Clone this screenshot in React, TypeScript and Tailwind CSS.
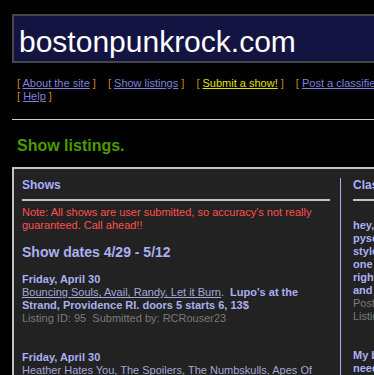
import React from "react";

type NavProps = { label: string; hot?: boolean };

function NavItem({ label, hot }: NavProps) {
  return (
    <span className="mr-[12px] whitespace-nowrap">
      <span className="text-[#d08a00]">[ </span>
      <a
        href="#"
        className={hot ? "text-[#e2e000] underline" : "text-[#7f82dc] underline"}
      >
        {label}
      </a>
      <span className="text-[#d08a00]"> ]</span>
    </span>
  );
}

export default function App() {
  return (
    <div className="w-[374px] h-[375px] overflow-hidden bg-black font-['Liberation_Sans',Arial,Helvetica,sans-serif]">
      <div className="w-[540px] pl-[12px] pt-[14px]">
        {/* masthead */}
        <div className="h-[49px] border-2 border-[#464646] bg-[#141442] pl-[5px] pt-[3px] text-[30px] text-white">
          bostonpunkrock.com
        </div>

        {/* nav */}
        <div className="mt-[14px] w-[430px] pl-[5px] text-[11px] leading-[13px]">
          <NavItem label="About the site" />
          <NavItem label="Show listings" />
          <NavItem label="Submit a show!" hot />
          <NavItem label="Post a classified ad" />
          <NavItem label="Help" />
        </div>

        <div className="mt-[16px] h-px bg-[#cccccc]" />

        <h1 className="mt-[17px] pl-[5px] text-[16px] leading-[18px] font-bold text-[#4c9a00]">
          Show listings.
        </h1>

        {/* listings panel */}
        <div className="mt-[12px] flex items-start border-2 border-[#c4c4c4] bg-[#222222] pt-[9px] pb-8 text-[11px] leading-[13px]">
          <div className="ml-[8px] w-[308px] shrink-0">
            <h2 className="text-[12px] leading-[14px] font-bold text-[#aab0ff]">Shows</h2>
            <div className="mt-[7px] h-[2px] bg-[#c4c4c4]" />
            <p className="mt-[5px] text-[#ff4f4f]">
              Note: All shows are user submitted, so accuracy's not really guaranteed. Call ahead!!
            </p>
            <h3 className="mt-[12px] text-[14px] leading-[16px] font-bold text-[#aab0f0]">
              Show dates 4/29 - 5/12
            </h3>

            <div className="mt-[13px]">
              <div className="font-bold text-[#aab0f0]">Friday, April 30</div>
              <div className="text-[#aab0f0]">
                <a href="#" className="text-[#a4a8d8] underline">
                  Bouncing Souls, Avail, Randy, Let it Burn
                </a>
                .&nbsp; <span className="font-bold">Lupo's at the Strand, Providence RI. doors 5 starts 6, 13$</span>
              </div>
              <div className="text-[#7a7a7a]">Listing ID: 95&nbsp; Submitted by: RCRouser23</div>
            </div>

            <div className="mt-[26px]">
              <div className="font-bold text-[#aab0f0]">Friday, April 30</div>
              <div className="text-[#a4a8d8]">
                Heather Hates You, The Spoilers, The Numbskulls, Apes Of Wrath, The Pinkerton Thugs
              </div>
            </div>
          </div>

          <div className="ml-[10px] w-[170px] shrink-0 border-l border-[#a8acf0] pl-[12px]">
            <h2 className="text-[12px] leading-[14px] font-bold text-[#aab0ff]">Classifieds</h2>
            <div className="mt-[7px] h-[2px] bg-[#c4c4c4]" />
            <div className="mt-[18px] font-bold text-[#aab0f0]">
              hey, we need a drummer
              <br />
              pyschobilly or punk, any
              <br />
              style is fine, must have
              <br />
              one kit and a van, get
              <br />
              right back to us asap
              <br />
              and lets rock out.
            </div>
            <div className="text-[#7a7a7a]">
              Posted: 4/28
              <br />
              Listing ID: 12
            </div>
            <div className="mt-[26px] font-bold text-[#aab0f0]">
              My band is looking for
              <br />
              needs a bass player
            </div>
          </div>
        </div>
      </div>
    </div>
  );
}
